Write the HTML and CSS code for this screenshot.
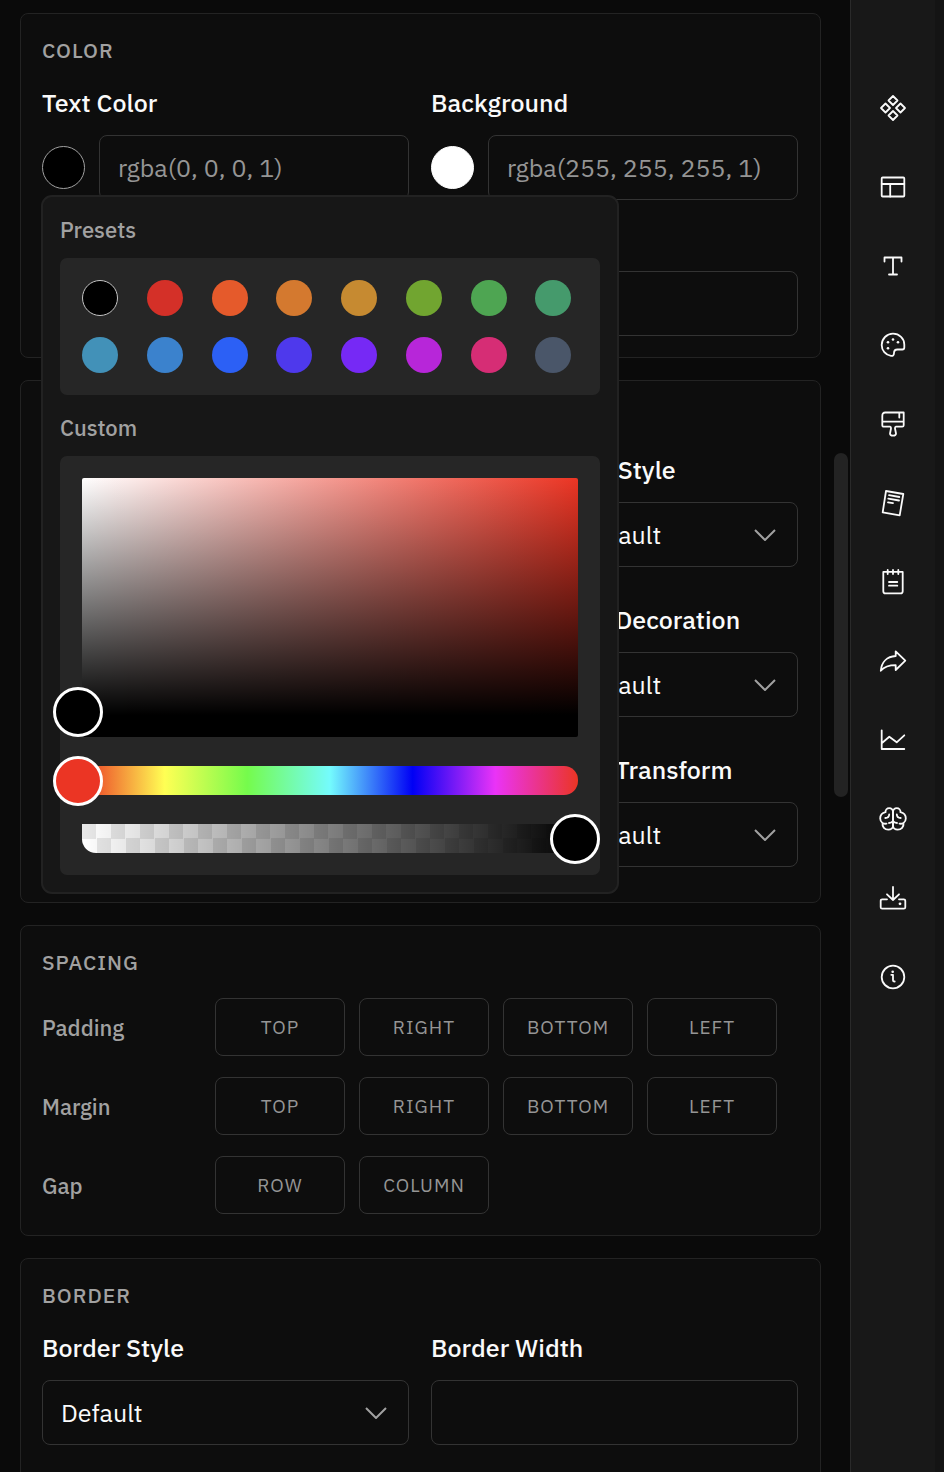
FILE: index.html
```html
<!DOCTYPE html>
<html lang="en">
<head>
  <meta charset="UTF-8">
  <meta name="viewport" content="width=device-width, initial-scale=1.0">
  <title>Style Editor</title>
  <link rel="stylesheet" href="styles.css">
</head>
<body>
  <div class="app">
    <main class="editor">
      <!-- Color -->
      <section class="panel">
        <h2>Color</h2>
        <div class="grid two">
          <div class="field">
            <label for="textColor">Text Color</label>
            <div class="color-field">
              <button class="swatch black" type="button" aria-label="Pick text color"></button>
              <input class="control" type="text" id="textColor" placeholder="rgba(0, 0, 0, 1)">

              <!-- Color picker popover -->
              <div class="popover">
                <h3>Presets</h3>
                <div class="box presets" id="presets"></div>
                <h3>Custom</h3>
                <div class="box picker">
                  <div class="saturation">
                    <div class="pointer"></div>
                  </div>
                  <div class="slider hue">
                    <input type="range" min="0" max="360" value="0" aria-label="Hue">
                  </div>
                  <div class="slider alpha">
                    <input type="range" min="0" max="100" value="100" aria-label="Alpha">
                  </div>
                </div>
              </div>
            </div>
          </div>
          <div class="field">
            <label for="background">Background</label>
            <div class="color-field">
              <button class="swatch white" type="button" aria-label="Pick background color"></button>
              <input class="control" type="text" id="background" placeholder="rgba(255, 255, 255, 1)">
            </div>
          </div>
          <div class="field wide">
            <input class="control" type="text" aria-label="Opacity">
          </div>
        </div>
      </section>

      <!-- Typography -->
      <section class="panel typography" aria-label="Typography">
        <div class="grid three">
          <div class="field spaced last-col">
            <label for="fontStyle">Font Style</label>
            <div class="select">
              <select class="control" id="fontStyle"><option>Default</option></select>
              <svg viewBox="0 0 22 12"><path d="M1 1l10 10L21 1"/></svg>
            </div>
          </div>
          <div class="field spaced last-col">
            <label for="textDecoration">Text Decoration</label>
            <div class="select">
              <select class="control" id="textDecoration"><option>Default</option></select>
              <svg viewBox="0 0 22 12"><path d="M1 1l10 10L21 1"/></svg>
            </div>
          </div>
          <div class="field spaced last-col">
            <label for="textTransform">Text Transform</label>
            <div class="select">
              <select class="control" id="textTransform"><option>Default</option></select>
              <svg viewBox="0 0 22 12"><path d="M1 1l10 10L21 1"/></svg>
            </div>
          </div>
        </div>
      </section>

      <!-- Spacing -->
      <section class="panel">
        <h2>Spacing</h2>
        <div class="spacing">
          <div class="spacing-row" role="group" aria-labelledby="padding">
            <span id="padding">Padding</span>
            <input type="text" placeholder="TOP" aria-label="Padding top">
            <input type="text" placeholder="RIGHT" aria-label="Padding right">
            <input type="text" placeholder="BOTTOM" aria-label="Padding bottom">
            <input type="text" placeholder="LEFT" aria-label="Padding left">
          </div>
          <div class="spacing-row" role="group" aria-labelledby="margin">
            <span id="margin">Margin</span>
            <input type="text" placeholder="TOP" aria-label="Margin top">
            <input type="text" placeholder="RIGHT" aria-label="Margin right">
            <input type="text" placeholder="BOTTOM" aria-label="Margin bottom">
            <input type="text" placeholder="LEFT" aria-label="Margin left">
          </div>
          <div class="spacing-row" role="group" aria-labelledby="gap">
            <span id="gap">Gap</span>
            <input type="text" placeholder="ROW" aria-label="Row gap">
            <input type="text" placeholder="COLUMN" aria-label="Column gap">
          </div>
        </div>
      </section>

      <!-- Border -->
      <section class="panel">
        <h2>Border</h2>
        <div class="grid two">
          <div class="field spaced">
            <label for="borderStyle">Border Style</label>
            <div class="select">
              <select class="control" id="borderStyle"><option>Default</option></select>
              <svg viewBox="0 0 22 12"><path d="M1 1l10 10L21 1"/></svg>
            </div>
          </div>
          <div class="field spaced">
            <label for="borderWidth">Border Width</label>
            <input class="control" type="text" id="borderWidth">
          </div>
        </div>
      </section>

      <div class="scroll-thumb"></div>
    </main>

    <nav class="sidebar">
      <button type="button" aria-label="Components">
        <svg viewBox="0 0 28 28"><path d="M14 2l4.500 4.500L14 11 9.500 6.500zM6.500 9.500L11 14l-4.500 4.500L2 14zM21.500 9.500L26 14l-4.500 4.500L17 14zM14 17l4.500 4.500L14 26l-4.500-4.500z"/></svg>
      </button>
      <button type="button" aria-label="Layout">
        <svg viewBox="0 0 28 28"><rect x="2.700" y="4.500" width="22.600" height="19" rx="1"/><path d="M2.700 11h22.600M11.200 11v12.500"/></svg>
      </button>
      <button type="button" aria-label="Text">
        <svg viewBox="0 0 28 28"><path d="M5.500 9.500v-4h17v4M14 5.500v17M10 22.500h8"/></svg>
      </button>
      <button type="button" aria-label="Colors">
        <svg viewBox="0 0 28 28"><path d="M12 24.900C6.500 24 2.700 19.500 2.700 14A11.300 11.300 0 0 1 14 2.700c6.300 0 11.300 4.800 11.300 10.800v3q0 2-2 2h-4.800q-3.500 0-3.500 3.500 0 3.200-3 2.900z"/><g class="dots"><circle cx="9" cy="11.300" r="1.300"/><circle cx="14" cy="8.500" r="1.300"/><circle cx="19" cy="11.300" r="1.300"/><circle cx="9" cy="17.300" r="1.300"/></g></svg>
      </button>
      <button type="button" aria-label="Styles">
        <svg viewBox="0 0 28 28"><path d="M6.300 2.500h18.400v12.700q0 1.500-1.500 1.500H17q-1.200.3-1 1.800l1 5q0 2.200-3 2.200t-3-2.200l1-5q.2-1.500-1-1.800H4.800q-1.500 0-1.500-1.500V6q0-3.500 3-3.500zM3.300 11.700h21.400M20.300 2.500v5"/></svg>
      </button>
      <button type="button" aria-label="Pages">
        <svg viewBox="0 0 28 28"><path d="M7 2l17.300 3-3.600 21.300-17-3zM10 6.200l10.300 1.800M9.300 9.700L20 11.500M9 13.300l5 .9"/></svg>
      </button>
      <button type="button" aria-label="Notes">
        <svg viewBox="0 0 28 28"><path d="M4.300 3.900h19.400v19.300q0 2.200-2.200 2.200h-15q-2.200 0-2.200-2.200zM8.700 2v4M14 2v4M19.300 2v4M10 14h8.300M10 17.700h8.300"/></svg>
      </button>
      <button type="button" aria-label="Share">
        <svg viewBox="0 0 28 28"><path d="M16.700 4.300l9.600 9.400-9.600 9.300v-4.800c-6.700 0-11.200 1.300-14.900 5.500C2.500 15 8 9.500 16.700 9z"/></svg>
      </button>
      <button type="button" aria-label="Analytics">
        <svg viewBox="0 0 28 28"><path d="M2.700 4.300v18.700h22.600M3 17l7.300-6.300 7.400 5.600 7.600-7"/></svg>
      </button>
      <button type="button" aria-label="AI">
        <svg viewBox="0 0 28 28"><path id="half" d="M14 6.800c0-2.300-1.700-3.700-3.700-3.700-2.300 0-4 1.700-3.800 4.100-3 .6-5.300 3.100-5.300 6.400 0 1.900.8 3.400 2.300 4.400-.5 4 2.300 6.700 5.800 6.700 2.700 0 4.700-1.700 4.700-4.200zM10.200 9.300c0 2.500-1.700 3.700-3.900 3.700M14 16c-1 1.300-2.300 2-4 2M3.500 18c1.300.8 2.500.9 4 .7"/><use href="#half" transform="matrix(-1 0 0 1 28 0)"/></svg>
      </button>
      <button type="button" aria-label="Import">
        <svg viewBox="0 0 28 28"><path d="M8 15.300H3.200q-1.500 0-1.500 1.500v6.400q0 1.500 1.500 1.500h21.600q1.500 0 1.500-1.500v-6.400q0-1.500-1.500-1.500H20M14 3v13M8 10.300l6 5.700 6-5.700"/><g class="dots"><circle cx="21" cy="19.800" r="1.400"/></g></svg>
      </button>
      <button type="button" aria-label="Info">
        <svg viewBox="0 0 28 28"><circle cx="14" cy="14" r="11.300"/><path d="M12.300 11.800H14v5.700q0 1 1.700 1"/><g class="dots"><circle cx="13.700" cy="8.700" r="1.300"/></g></svg>
      </button>
    </nav>
  </div>

  <script>
    const presets = document.getElementById("presets");
    const colors = [
      "#000000", "#d43028", "#e55a2b", "#d4792f", "#c68a31", "#71a530", "#4ea552", "#459a6c",
      "#4291b8", "#3b82cd", "#2c60f5", "#4e39ec", "#7629f5", "#b726d9", "#d62d75", "#4a5669"
    ];

    // Build preset swatches
    colors.forEach((color) => {
      const swatch = document.createElement("button");
      swatch.type = "button";
      swatch.className = "preset";
      swatch.style.backgroundColor = color;
      swatch.setAttribute("aria-label", color);
      presets.appendChild(swatch);
    });
    presets.firstChild.classList.add("selected");
  </script>
</body>
</html>
```

FILE: styles.css
```css
* {
  box-sizing: border-box;
}

body {
  margin: 0;
  font-family: "IBM Plex Sans", Roboto, sans-serif;
  font-size: 25px;
  background-color: #0a0a0a;
  color: #fafafa;
}

button,
input,
select {
  font: inherit;
  color: inherit;
}

.app {
  display: flex;
  height: 100vh;
  overflow: hidden;
}

.editor {
  position: relative;
  flex: 1;
  min-width: 0;
  padding: 13px 29px 0 20px;
}

.panel {
  margin-bottom: 22px;
  padding: 21px 22px 21px 21px;
  background-color: #0d0d0d;
  border: 1px solid #232323;
  border-radius: 8px;
}

.panel h2 {
  margin: 0 0 21px;
  font-size: 21px;
  font-weight: 500;
  line-height: 30px;
  letter-spacing: 1px;
  text-transform: uppercase;
  color: #a1a1a1;
}

.typography {
  padding-top: 72px;
}

.grid {
  display: grid;
  gap: 22px;
}

.two {
  grid-template-columns: repeat(2, minmax(0, 1fr));
}

.three {
  grid-template-columns: repeat(3, minmax(0, 1fr));
}

.spaced {
  margin-bottom: 14px;
}

.wide {
  grid-column: 1 / -1;
  padding-top: 49px;
}

.last-col {
  grid-column: 3;
}

.field label {
  display: block;
  margin-bottom: 15px;
  font-weight: 500;
  line-height: 34px;
}

.control {
  display: block;
  width: 100%;
  min-width: 0;
  height: 65px;
  padding: 0 18px;
  background-color: transparent;
  border: 1px solid #333;
  border-radius: 8px;
  appearance: none;
}

input::placeholder {
  color: #959595;
  opacity: 1;
}

.select {
  display: grid;
  align-items: center;
}

.select > * {
  grid-area: 1 / 1;
}

.select svg {
  justify-self: end;
  width: 22px;
  margin-right: 22px;
  fill: none;
  stroke: #a1a1a1;
  stroke-width: 2;
  pointer-events: none;
}

.color-field {
  position: relative;
  display: flex;
  align-items: center;
  gap: 14px;
}

.swatch {
  flex: none;
  width: 43px;
  height: 43px;
  padding: 0;
  border: 1px solid #fff;
  border-radius: 50%;
}

.black {
  background-color: #000;
  border-color: #a1a1a1;
}

.white {
  background-color: #fff;
}

/* Popover */
.popover {
  position: absolute;
  top: 60px;
  left: -1px;
  z-index: 10;
  width: 578px;
  padding: 18px 17px 17px;
  background-color: #171717;
  border: 2px solid #222;
  border-radius: 11px;
}

.popover h3 {
  margin: 0 0 13px;
  font-size: 22px;
  font-weight: 500;
  line-height: 30px;
  color: #a1a1a1;
}

.box {
  padding: 22px;
  background-color: #262626;
  border-radius: 7px;
}

.presets {
  display: grid;
  grid-template-columns: repeat(8, minmax(0, 1fr));
  gap: 21px 22px;
  margin-bottom: 18px;
}

.preset {
  width: 36px;
  height: 36px;
  padding: 0;
  border: none;
  border-radius: 50%;
}

.preset.selected {
  border: 1px solid #c4c4c4;
}

.picker {
  display: flex;
  flex-direction: column;
  gap: 29px;
}

.saturation {
  position: relative;
  height: 259px;
  border-bottom: 22px solid #000;
  border-radius: 2px;
  background-image:
    linear-gradient(to top, #000, transparent),
    linear-gradient(to right, #fff, #eb3524);
}

.pointer {
  position: absolute;
  left: -29px;
  bottom: -22px;
  width: 50px;
  height: 50px;
  background-color: #000;
  border: 3px solid #fff;
  border-radius: 50%;
}

.slider {
  position: relative;
  height: 29px;
}

.hue {
  border-radius: 14px;
  background-image: linear-gradient(to right, #eb3524, #ffff54, #75fb4c, #74fbfd, #0000f5, #ea33f7, #eb3524);
}

.alpha {
  border-radius: 0 0 14px 14px;
  background-image:
    linear-gradient(to right, transparent, #000),
    conic-gradient(#fff 25%, #e8e8e8 0 50%, #fff 0 75%, #e8e8e8 0);
  background-size: auto, 29px 29px;
}

.slider input {
  position: absolute;
  top: -10px;
  left: -29px;
  width: calc(100% + 51px);
  height: 50px;
  margin: 0;
  background: none;
  appearance: none;
}

.slider input::-webkit-slider-thumb {
  width: 50px;
  height: 50px;
  background-color: #000;
  border: 3px solid #fff;
  border-radius: 50%;
  appearance: none;
}

.hue input::-webkit-slider-thumb {
  background-color: #eb3524;
}

/* Spacing */
.spacing {
  display: grid;
  gap: 21px;
}

.spacing-row {
  display: grid;
  grid-template-columns: 159px repeat(4, minmax(0, 1fr));
  align-items: center;
  gap: 14px;
  padding-right: 21px;
}

.spacing-row span {
  font-size: 22px;
  font-weight: 500;
  color: #a1a1a1;
}

.spacing-row input {
  width: 100%;
  height: 58px;
  padding: 0 10px;
  font-size: 19px;
  letter-spacing: 1px;
  text-align: center;
  background-color: transparent;
  border: 1px solid #333;
  border-radius: 8px;
}

.scroll-thumb {
  position: absolute;
  top: 453px;
  right: 2px;
  width: 14px;
  height: 344px;
  background-color: #232323;
  border-radius: 7px;
}

/* Sidebar */
.sidebar {
  flex: none;
  display: flex;
  flex-direction: column;
  align-items: center;
  gap: 36px;
  width: 94px;
  padding-top: 86px;
  background-color: #181818;
  border-left: 1px solid #2a2a2a;
  border-right: 9px solid #141414;
}

.sidebar button {
  display: grid;
  place-items: center;
  width: 43px;
  height: 43px;
  padding: 0;
  background: none;
  border: none;
}

.sidebar svg {
  width: 28px;
  height: 28px;
  fill: none;
  stroke: #fafafa;
  stroke-width: 1.8;
  stroke-linejoin: round;
  stroke-linecap: round;
}

.sidebar .dots {
  fill: #fafafa;
  stroke: none;
}
```
